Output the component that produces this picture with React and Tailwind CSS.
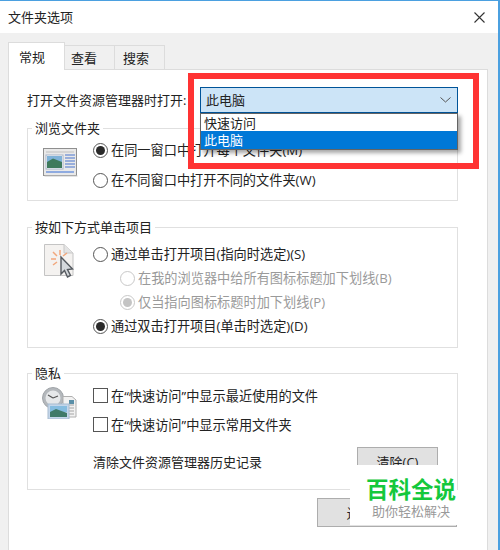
import React from 'react';

// Radio button, checked / disabled variants
const Radio = ({ checked = false, disabled = false, children }) => (
  <div className={`flex items-center h-[24px] gap-[3px] text-[13.2px] ${disabled ? 'text-[#9a9a9a]' : 'text-[#222222]'}`}>
    <span className={`w-[15px] h-[15px] rounded-full border flex items-center justify-center bg-white shrink-0 ${disabled ? 'border-[#c8c8c8]' : 'border-[#555555]'}`}>
      {checked && <span className={`w-[9px] h-[9px] rounded-full ${disabled ? 'bg-[#c4c4c4]' : 'bg-[#2a2a2a]'}`}></span>}
    </span>
    <span>{children}</span>
  </div>
);

const Check = ({ children }) => (
  <div className="flex items-center h-[29px] gap-[3px] text-[13.2px] text-[#222222]">
    <span className="w-[15px] h-[15px] border border-[#555555] bg-white shrink-0"></span>
    <span>{children}</span>
  </div>
);

const Group = ({ title, className = '', children }) => (
  <fieldset className={`border border-[#e0e0e0] ${className}`}>
    <legend className="ml-[4px] px-[3px] h-[16px] leading-[16px] text-[#222222]">{title}</legend>
    <div className="pl-[15px]">{children}</div>
  </fieldset>
);

const BrowseIcon = () => (
  <svg width="35" height="29" viewBox="0 0 35 29" className="shrink-0">
    <rect x="0.5" y="0.5" width="33" height="27" fill="#e9e9e9" stroke="#8f8f8f" />
    <rect x="1.5" y="27.5" width="33" height="1" fill="#c8c8c8" />
    <rect x="3" y="7" width="17" height="14" fill="#ffffff" stroke="#a8b4c8" />
    <rect x="4" y="8" width="15" height="6" fill="#7fb2d8" />
    <path d="M4 14 L10 10.5 L19 14 L19 20 L4 20 Z" fill="#3f7a5c" />
    <path d="M22 7h10M22 10h10M22 13h10M22 16h10M22 19h10" stroke="#7e9bd6" strokeWidth="1.4" />
    <rect x="3" y="23" width="28" height="2" fill="#8fabe0" />
    <rect x="3" y="3" width="28" height="2" fill="#d4d4d4" />
  </svg>
);

const ClickIcon = () => (
  <svg width="31" height="35" viewBox="0 0 31 35" className="shrink-0">
    <path d="M0.5 0.5 H20 L29 9 V31.5 H0.5 Z" fill="#f4f2f0" stroke="#c4c4c4" />
    <path d="M20 0.5 V9 H29" fill="#e4e4e4" stroke="#c8c8c8" />
    <path d="M16 6 V11 M9 8 L13 12 M23 9 L19 12 M7 15 H12 M9 21 L13 18" stroke="#f2a77c" strokeWidth="1.5" />
    <path d="M17 13 V30 L20.5 26.5 L23.5 33 L26.5 31.5 L23.5 25.5 L28.5 25 Z" fill="#d4d8dc" stroke="#555a60" strokeWidth="1.4" />
  </svg>
);

const HistoryIcon = () => (
  <svg width="35" height="32" viewBox="0 0 35 32" className="shrink-0 -ml-px">
    <circle cx="11" cy="11" r="10.5" fill="#b4b8bc" stroke="#a0a4a8" />
    <circle cx="11" cy="11" r="7.5" fill="#e6e8ea" />
    <path d="M11 11 L6 8 M11 11 L16 9" stroke="#555555" strokeWidth="1.2" />
    <path d="M21 9.5 H30 L34 13 V30 H21 Z" fill="#f2f2f2" stroke="#b0b0b0" />
    <path d="M25 18h7M25 21h7M25 24h7M25 27h7" stroke="#a4a4a4" />
    <rect x="27" y="13" width="5" height="4" fill="#5a8fa8" />
    <rect x="6" y="17" width="21" height="15" fill="#c4d6ea" stroke="#a8bcd0" />
    <rect x="8" y="19" width="17" height="6" fill="#86bde0" />
    <path d="M8 25 L14 22 L25 26 V30 H8 Z" fill="#3f7a68" />
  </svg>
);

export default function App() {
  return (
    <div className="relative w-[500px] h-[550px] overflow-hidden bg-white text-[13px] leading-[18px] font-['Open_Sans','Noto_Sans_CJK_SC',sans-serif]">
      <div className="flex flex-col h-full border-t border-r-2 border-[#4ba0e0]">
        {/* Title bar */}
        <div className="flex items-center justify-between h-[32px] pl-[8px] pr-[13px] bg-white shrink-0">
          <span className="text-[#222222]">文件夹选项</span>
          <svg width="11" height="11" viewBox="0 0 11 11">
            <path d="M0.5 0.5 L10.5 10.5 M10.5 0.5 L0.5 10.5" stroke="#333333" strokeWidth="1.1" />
          </svg>
        </div>

        <div className="flex-1 flex flex-col bg-[#f0f0f0] pl-[8px] pr-[10px] pt-[9px]">
          {/* Tabs */}
          <div className="flex items-end h-[27px] shrink-0 relative z-10">
            <div className="w-[57px] h-[28px] -mb-px pl-[10px] bg-white border border-b-0 border-[#dcdcdc] flex items-center text-[#222222]">常规</div>
            <div className="w-[50px] h-[24px] pl-[6px] bg-[#f0f0f0] border-t border-r border-[#dcdcdc] flex items-center text-[#222222]">查看</div>
            <div className="w-[50px] h-[24px] pl-[8px] bg-[#f0f0f0] border-t border-r border-[#dcdcdc] flex items-center text-[#222222]">搜索</div>
          </div>

          {/* Panel */}
          <div className="flex-1 bg-white border border-b-0 border-[#dcdcdc] pl-[18px] pr-[29px] pt-[17px] flex flex-col">
            <div className="flex items-center justify-between h-[26px] text-[#222222]">
              <span>打开文件资源管理器时打开:</span>
              <div className="relative w-[258px] h-[26px]">
                <div className="flex items-center justify-between h-full pl-[5px] pr-[6px] bg-[#cce4f7] border border-[#005499]">
                  <span>此电脑</span>
                  <svg width="11" height="6" viewBox="0 0 11 6">
                    <path d="M0.5 0.5 L5.5 5 L10.5 0.5" fill="none" stroke="#555555" />
                  </svg>
                </div>
                {/* Open dropdown */}
                <div className="absolute left-0 top-[26px] w-full h-[37px] z-20 bg-white border border-[#646464] shadow-[3px_3px_4px_rgba(0,0,0,0.35)]">
                  <div className="h-[17px] flex items-center pl-[3px]">快速访问</div>
                  <div className="h-[18px] flex items-center pl-[3px] bg-[#0078d7] text-white">此电脑</div>
                </div>
              </div>
            </div>

            <Group title="浏览文件夹" className="h-[81px] mt-[7px]">
              <div className="flex">
                <div className="mt-[12px] w-[50px]"><BrowseIcon /></div>
                <div className="flex flex-col gap-[6px] mt-[2px]">
                  <Radio checked>在同一窗口中打开每个文件夹(M)</Radio>
                  <Radio>在不同窗口中打开不同的文件夹(W)</Radio>
                </div>
              </div>
            </Group>

            <Group title="按如下方式单击项目" className="h-[129px] mt-[18px]">
              <div className="flex">
                <div className="mt-[9px] w-[50px] pl-[1px]"><ClickIcon /></div>
                <div className="flex flex-col mt-[7px]">
                  <Radio>通过单击打开项目(指向时选定)(S)</Radio>
                  <div className="pl-[27px]">
                    <Radio disabled>在我的浏览器中给所有图标标题加下划线(B)</Radio>
                    <Radio checked disabled>仅当指向图标标题时加下划线(P)</Radio>
                  </div>
                  <Radio checked>通过双击打开项目(单击时选定)(D)</Radio>
                </div>
              </div>
            </Group>

            <Group title="隐私" className="h-[125px] mt-[17px]">
              <div className="flex">
                <div className="mt-[6px] w-[50px]"><HistoryIcon /></div>
                <div className="flex flex-col w-[345px]">
                  <Check>在“快速访问”中显示最近使用的文件</Check>
                  <Check>在“快速访问”中显示常用文件夹</Check>
                  <div className="flex items-center justify-between mt-[8px] text-[#222222]">
                    <span className="mt-px">清除文件资源管理器历史记录</span>
                    <button className="w-[81px] h-[29px] bg-[#e1e1e1] border border-[#adadad]">清除(C)</button>
                  </div>
                </div>
              </div>
            </Group>

            <div className="flex justify-end mt-[8px] pr-px">
              <button className="w-[140px] h-[29px] bg-[#e1e1e1] border border-[#adadad] text-[#222222]">还原默认值(R)</button>
            </div>
          </div>
        </div>
      </div>

      {/* Red annotation frame */}
      <div className="absolute left-[188px] top-[73px] w-[291px] h-[96px] border-[6px] border-[#ff3333] z-30"></div>

      {/* Watermark */}
      <div className="absolute left-[350px] top-[465px] w-[107px] h-[60px] bg-white z-30 flex flex-col items-center pl-[15px]">
        <span className="mt-[11px] text-[22.5px] leading-[28px] font-bold text-[#14c83c] whitespace-nowrap">百科全说</span>
        <span className="-mt-px text-[13px] leading-[16px] text-[#999999] whitespace-nowrap">助你轻松解决</span>
      </div>
    </div>
  );
}
